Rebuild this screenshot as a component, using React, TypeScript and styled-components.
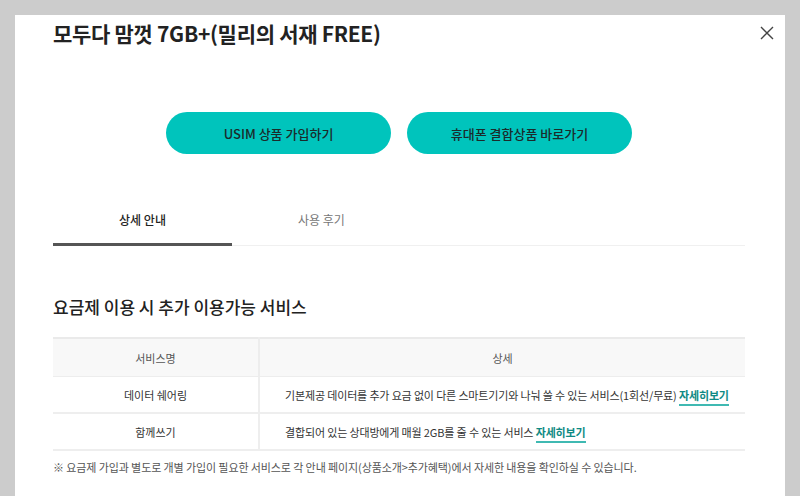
import React from 'react';
import styled, {createGlobalStyle} from "styled-components";

const GlobalStyle = createGlobalStyle`
    html, body {
        margin: 0;
        padding: 0;
        background: #cccccc;
        font-family: "Noto Sans CJK KR", "Noto Sans", sans-serif;
        overflow: hidden;
    }
`

type Service = { name: string; detail: string };

const services: Service[] = [
    {name: '데이터 쉐어링', detail: '기본제공 데이터를 추가 요금 없이 다른 스마트기기와 나눠 쓸 수 있는 서비스(1회선/무료)'},
    {name: '함께쓰기', detail: '결합되어 있는 상대방에게 매월 2GB를 줄 수 있는 서비스'},
];

export default function App() {
    return (
        <Page>
            <GlobalStyle/>
            <Modal>
                <CloseButton aria-label="닫기">
                    <svg width="14" height="14" viewBox="0 0 14 14">
                        <path d="M1 1L13 13M13 1L1 13" stroke="#444" strokeWidth="1.4"/>
                    </svg>
                </CloseButton>
                <Title>모두다 맘껏 7GB+(밀리의 서재 FREE)</Title>

                <ButtonRow>
                    <PillButton>USIM 상품 가입하기</PillButton>
                    <PillButton>휴대폰 결합상품 바로가기</PillButton>
                </ButtonRow>

                <Tabs>
                    <Tab active>상세 안내</Tab>
                    <Tab>사용 후기</Tab>
                </Tabs>

                <SectionTitle>요금제 이용 시 추가 이용가능 서비스</SectionTitle>

                <Table>
                    <thead>
                    <tr>
                        <Th>서비스명</Th>
                        <Th>상세</Th>
                    </tr>
                    </thead>
                    <tbody>
                    {services.map(s => (
                        <tr key={s.name}>
                            <Td>{s.name}</Td>
                            <DetailTd>{s.detail} <MoreLink>자세히보기</MoreLink></DetailTd>
                        </tr>
                    ))}
                    </tbody>
                </Table>

                <Note>※ 요금제 가입과 별도로 개별 가입이 필요한 서비스로 각 안내 페이지(상품소개&gt;추가혜택)에서 자세한 내용을 확인하실 수 있습니다.</Note>
            </Modal>
        </Page>
    );
}

const Page = styled.div`
    padding: 15px 15px 0 15px;
    height: 496px;
    box-sizing: border-box;
`

const Modal = styled.div`
    position: relative;
    background: #fff;
    height: 100%;
    padding: 3px 40px 0 38px;
    box-sizing: border-box;
`

const CloseButton = styled.button`
    position: absolute;
    top: 8px;
    right: 8px;
    width: 20px;
    height: 20px;
    border: none;
    background: none;
    padding: 0;
    display: flex;
    align-items: center;
    justify-content: center;
`

const Title = styled.h1`
    margin: 0;
    font-size: 21px;
    font-weight: 700;
    color: #222;
    line-height: 30px;
    letter-spacing: -0.3px;
`

const ButtonRow = styled.div`
    display: flex;
    justify-content: center;
    gap: 16px;
    margin-top: 64px;
`

const PillButton = styled.button`
    width: 225px;
    height: 42px;
    border-radius: 21px;
    border: none;
    background: #00c4bc;
    color: #1b2b2b;
    font-family: inherit;
    font-size: 13px;
    font-weight: 500;
`

const Tabs = styled.div`
    display: flex;
    margin-top: 47px;
    border-bottom: 1px solid #f0f0f0;
`

const Tab = styled.div<{ active?: boolean }>`
    width: 179px;
    text-align: center;
    font-size: 12px;
    line-height: 20px;
    padding: 9px 0 13px;
    margin-bottom: -1px;
    color: ${p => p.active ? '#222' : '#777'};
    font-weight: ${p => p.active ? 500 : 400};
    border-bottom: 3px solid ${p => p.active ? '#555' : 'transparent'};
`

const SectionTitle = styled.h2`
    margin: 48px 0 0;
    font-size: 17px;
    font-weight: 500;
    color: #222;
    line-height: 26px;
`

const Table = styled.table`
    width: 100%;
    margin-top: 17px;
    border-collapse: collapse;
    border-top: 2px solid #eaeaea;
    font-size: 11px;
    color: #333;
`

const Th = styled.th`
    background: #f8f8f8;
    font-weight: 400;
    color: #555;
    height: 37px;
    padding: 0;
    border-bottom: 1px solid #ededed;
    border-left: 2px solid #ededed;
    &:first-child {
        width: 205px;
        border-left: none;
    }
`

const Td = styled.td`
    text-align: center;
    height: 35px;
    padding: 0;
    border-bottom: 2px solid #eeeeee;
    border-left: 2px solid #eeeeee;
    &:first-child {
        border-left: none;
    }
`

const DetailTd = styled(Td)`
    text-align: left;
    padding-left: 25px;
    letter-spacing: -0.15px;
`

const MoreLink = styled.a`
    color: #0e8a84;
    font-weight: 700;
    text-decoration: none;
    border-bottom: 2px solid #3fb9b2;
    padding-bottom: 1px;
`

const Note = styled.p`
    margin: 8px 0 0;
    font-size: 11px;
    color: #555;
    letter-spacing: -0.1px;
`
